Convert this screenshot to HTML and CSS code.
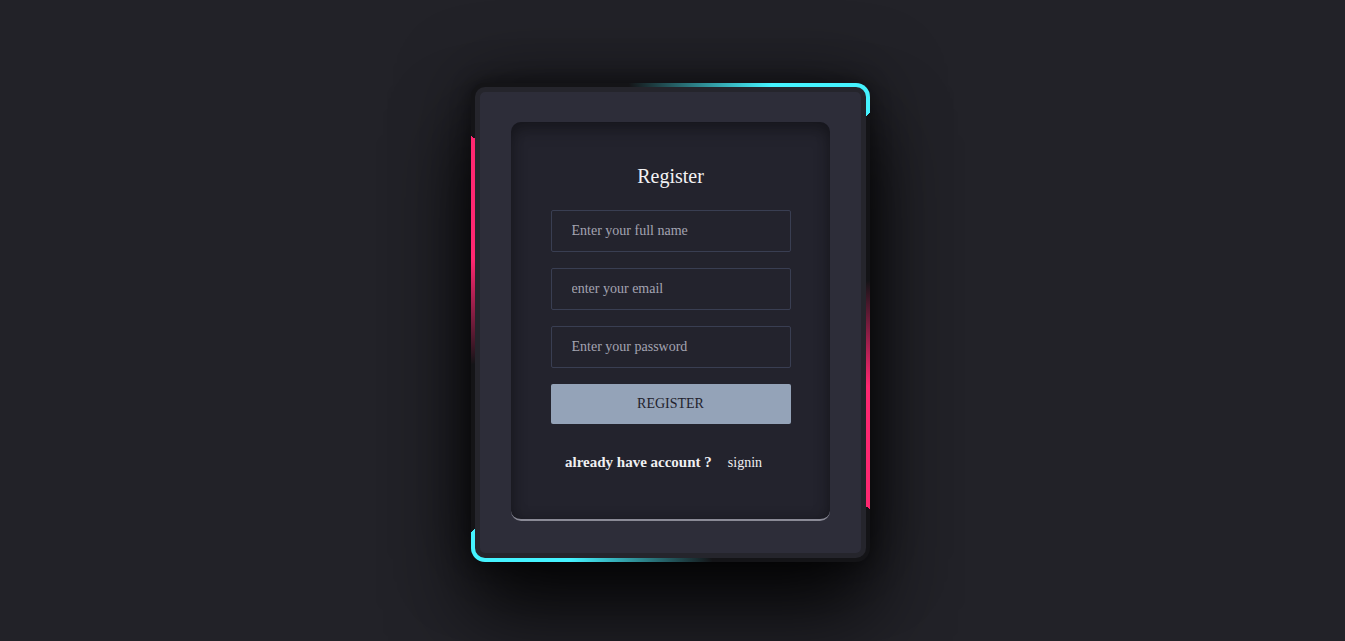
FILE: index.html
```html
<!DOCTYPE html>
<html lang="en">
<head>
<meta charset="utf-8">
<title>Register</title>
<link rel="stylesheet" href="styles.css">
</head>
<body>
<main class="page">
  <div class="frame">
    <div class="card">
      <form class="panel">
        <h2 class="title">Register</h2>
        <input class="field" type="text" placeholder="Enter your full name">
        <input class="field" type="email" placeholder="enter your email">
        <input class="field" type="password" placeholder="Enter your password">
        <button class="btn" type="button">REGISTER</button>
        <p class="foot"><span class="foot-q">already have account ?</span><a class="foot-link" href="#">signin</a></p>
      </form>
    </div>
  </div>
</main>
</body>
</html>
```
FILE: styles.css
```css
* { box-sizing: border-box; }
html, body { margin: 0; padding: 0; }
body {
  background: #222228;
  font-family: "Liberation Serif", "Times New Roman", serif;
  color: #fff;
}
.page {
  width: 1345px;
  height: 641px;
  display: flex;
  justify-content: center;
  align-items: center;
  overflow: hidden;
}
.frame {
  width: 399px;
  height: 479px;
  margin: 4px 4px 0 0;
  padding: 4px;
  border-radius: 14px;
  background:
    conic-gradient(from -10deg at 50% 50%,
      rgba(69,243,255,0) 0deg, #45f3ff 33deg, #45f3ff 53.5deg, rgba(0,0,0,0) 53.5deg,
      rgba(255,39,112,0) 88deg, #ff2770 118deg, #ff2770 143.2deg, rgba(0,0,0,0) 143.2deg,
      rgba(69,243,255,0) 180deg, #45f3ff 213deg, #45f3ff 233.5deg, rgba(0,0,0,0) 233.5deg,
      rgba(255,39,112,0) 268deg, #ff2770 298deg, #ff2770 323.2deg, rgba(0,0,0,0) 323.2deg),
    #141417;
  box-shadow: 0 50px 80px rgba(0,0,0,0.8), 0 0 70px rgba(0,0,0,0.5), 0 0 20px rgba(0,0,0,0.4);
}
.card {
  width: 391px;
  height: 471px;
  border-radius: 10px;
  background: #2d2d39;
  border: 5px solid #25252c;
  padding: 30px 31px 0 31px;
}
.panel {
  width: 319px;
  height: 399px;
  border-radius: 10px;
  background: #23232d;
  border-bottom: 2px solid #8a8a96;
  box-shadow: inset 0 8px 16px rgba(0,0,0,0.28), inset 0 0 14px rgba(0,0,0,0.2);
  display: flex;
  flex-direction: column;
  align-items: center;
  padding-top: 43px;
  margin: 0;
}
.title {
  margin: 0 0 22px;
  font-size: 20px;
  line-height: 23px;
  font-weight: normal;
  color: #f2f2f4;
}
.field {
  width: 240px;
  height: 42px;
  margin: 0 0 16px;
  padding: 0 20px;
  border: 1px solid #393e52;
  border-radius: 2px;
  background: transparent;
  color: #fff;
  font-family: "Liberation Serif", "Times New Roman", serif;
  font-size: 14px;
  outline: none;
}
.field::placeholder { color: #a4a4b2; }
.btn {
  width: 240px;
  height: 40px;
  border: none;
  border-radius: 2px;
  background: #94a3b8;
  color: #22222c;
  font-family: "Liberation Serif", "Times New Roman", serif;
  font-size: 14px;
  cursor: pointer;
}
.foot {
  align-self: stretch;
  margin: 29px 0 0;
  padding-left: 54px;
  display: flex;
  align-items: baseline;
  gap: 16px;
  line-height: 18px;
}
.foot-q {
  font-size: 15px;
  color: #f0f0f2;
  font-weight: 600;
}
.foot-link {
  font-size: 14px;
  color: #f0f0f2;
  text-decoration: none;
}
```
